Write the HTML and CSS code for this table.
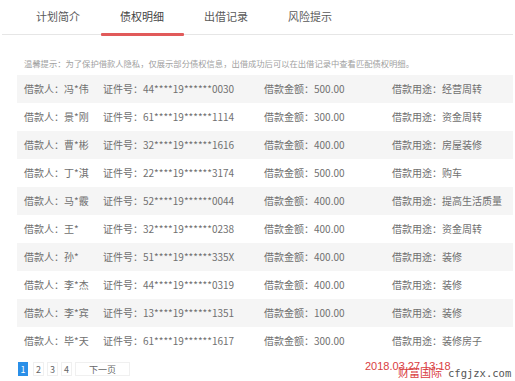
FILE: index.html
```html
<!DOCTYPE html>
<html lang="zh">
<head>
<meta charset="utf-8">
<link rel="stylesheet" href="styles.css">
</head>
<body>
<div class="page">
  <div class="tabs">
    <div class="tab">计划简介</div>
    <div class="tab active">债权明细</div>
    <div class="tab">出借记录</div>
    <div class="tab">风险提示</div>
  </div>
  <p class="notice">温馨提示：为了保护借款人隐私，仅展示部分债权信息，出借成功后可以在出借记录中查看匹配债权明细。</p>
  <div class="list">
    <div class="row"><span>借款人：冯*伟</span><span>证件号：44****19******0030</span><span>借款金额：500.00</span><span>借款用途：经营周转</span></div>
    <div class="row"><span>借款人：景*刚</span><span>证件号：61****19******1114</span><span>借款金额：300.00</span><span>借款用途：资金周转</span></div>
    <div class="row"><span>借款人：曹*彬</span><span>证件号：32****19******1616</span><span>借款金额：400.00</span><span>借款用途：房屋装修</span></div>
    <div class="row"><span>借款人：丁*淇</span><span>证件号：22****19******3174</span><span>借款金额：500.00</span><span>借款用途：购车</span></div>
    <div class="row"><span>借款人：马*霰</span><span>证件号：52****19******0044</span><span>借款金额：400.00</span><span>借款用途：提高生活质量</span></div>
    <div class="row"><span>借款人：王*</span><span>证件号：32****19******0238</span><span>借款金额：400.00</span><span>借款用途：资金周转</span></div>
    <div class="row"><span>借款人：孙*</span><span>证件号：51****19******335X</span><span>借款金额：400.00</span><span>借款用途：装修</span></div>
    <div class="row"><span>借款人：李*杰</span><span>证件号：44****19******0319</span><span>借款金额：400.00</span><span>借款用途：装修</span></div>
    <div class="row"><span>借款人：李*宾</span><span>证件号：13****19******1351</span><span>借款金额：100.00</span><span>借款用途：装修</span></div>
    <div class="row"><span>借款人：毕*天</span><span>证件号：61****19******1617</span><span>借款金额：300.00</span><span>借款用途：装修房子</span></div>
  </div>
  <div class="pager">
    <span class="pg current">1</span>
    <span class="pg">2</span>
    <span class="pg">3</span>
    <span class="pg">4</span>
    <span class="pg next">下一页</span>
  </div>
  <div class="stamp">2018.03.27 13:18</div>
  <div class="mark"><span class="mark-cn">财富国际</span><span class="mark-en">cfgjzx.com</span></div>
</div>
</body>
</html>
```
FILE: styles.css
```css
* { box-sizing: border-box; }
html, body { margin: 0; padding: 0; background: #fff; }
body {
  font-family: "Noto Sans CJK SC", "Open Sans", sans-serif;
  color: #666;
}
.page { position: relative; width: 515px; height: 381px; overflow: hidden; }

.tabs {
  display: flex;
  margin: 0 2px;
  padding-left: 14px;
  height: 35px;
  border-bottom: 1px solid #e6e6e6;
}
.tab {
  position: relative;
  width: 84px;
  text-align: center;
  font-size: 11px;
  line-height: 33px;
  color: #5a5a5a;
}
.tab.active { color: #444; }
.tab.active::after {
  content: "";
  position: absolute;
  left: 1px;
  right: 0;
  bottom: -2px;
  height: 3px;
  background: #e15a5a;
  border-radius: 1px;
}

.notice {
  margin: 22px 0 0 24px;
  font-size: 8.3px;
  line-height: 12px;
  color: #a0a0a0;
  white-space: nowrap;
}

.list {
  margin: 6px 2px 0 17px;
}
.row {
  display: grid;
  grid-template-columns: 79px 161px 128px 1fr;
  align-items: center;
  height: 28px;
  padding-left: 7px;
  padding-bottom: 1px;
  font-size: 10px;
  color: #707070;
  white-space: nowrap;
}
.row:nth-child(odd) { background: #f5f5f5; }

.pager {
  display: flex;
  align-items: center;
  gap: 3px;
  margin: 7px 0 0 18px;
  height: 14px;
}
.pg {
  display: inline-flex;
  align-items: center;
  justify-content: center;
  width: 11px;
  height: 14px;
  font-size: 9px;
  color: #666;
  border: 1px solid #f0f0f0;
}
.pg.current {
  width: 10px;
  background: #2a8fe8;
  border-color: #2a8fe8;
  color: #fff;
  margin-right: 2px;
}
.pg.next { width: 55px; }

.stamp {
  position: absolute;
  left: 365px;
  top: 360px;
  font-family: "Liberation Sans", sans-serif;
  font-size: 11px;
  color: #d9403f;
  line-height: 13px;
}
.mark {
  position: absolute;
  left: 398px;
  top: 364px;
  display: flex;
  align-items: baseline;
  gap: 6px;
  line-height: 16px;
}
.mark-cn {
  font-family: "Noto Sans CJK SC", sans-serif;
  font-size: 11px;
  color: #d9403f;
}
.mark-en {
  font-family: "DejaVu Sans Mono", monospace;
  font-size: 10.5px;
  color: #555;
}
```
